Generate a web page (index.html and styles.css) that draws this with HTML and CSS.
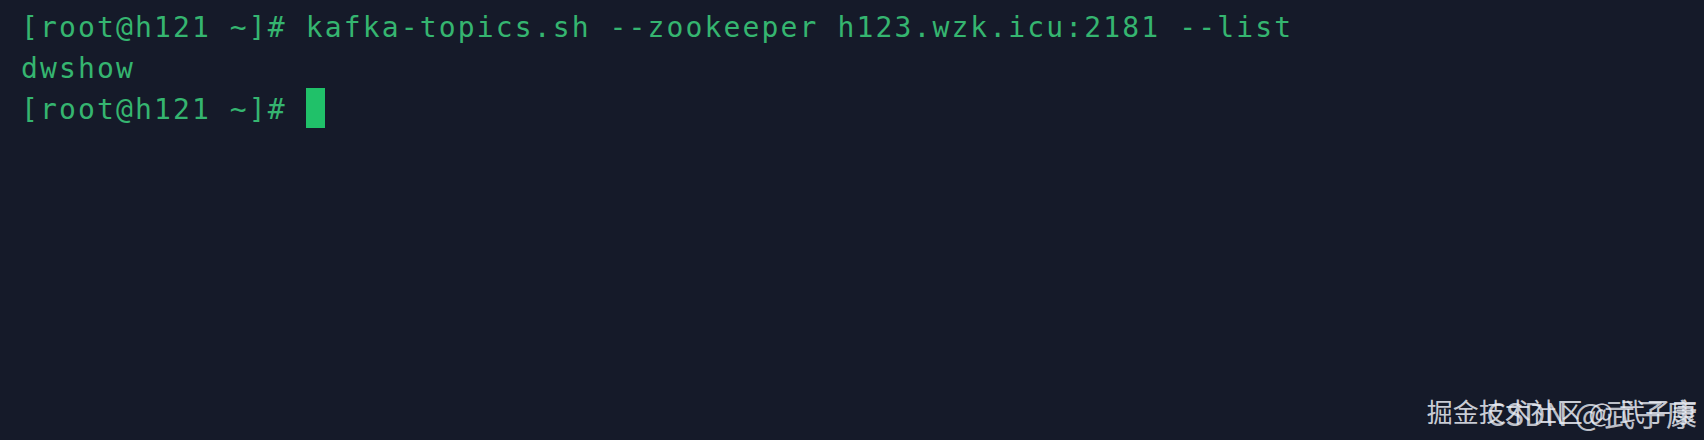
FILE: index.html
```html
<!DOCTYPE html>
<html lang="zh">
<head>
<meta charset="utf-8">
<title>terminal</title>
<link rel="stylesheet" href="styles.css">
</head>
<body>
<main class="terminal">
<div class="line">[root@h121 ~]# kafka-topics.sh --zookeeper h123.wzk.icu:2181 --list</div>
<div class="line">dwshow</div>
<div class="line">[root@h121 ~]# <span class="cursor"></span></div>
</main>
<div class="watermark wm-juejin">掘金技术社区 @ 武子康</div>
<div class="watermark wm-csdn">CSDN @武子康</div>
</body>
</html>
```

FILE: styles.css
```css
html, body {
  margin: 0;
  padding: 0;
}
body {
  width: 1704px;
  height: 440px;
  background: #151a29;
  position: relative;
  overflow: hidden;
}
.terminal {
  padding: 7px 0 0 21px;
  font-family: "DejaVu Sans Mono", "Liberation Mono", monospace;
  font-size: 28px;
  letter-spacing: 2.13px;
  line-height: 41px;
  color: #35b570;
}
.line {
  white-space: pre;
  height: 41px;
}
.cursor {
  display: inline-block;
  width: 19px;
  height: 40px;
  margin-top: -1px;
  background: #20c169;
  vertical-align: top;
}
.watermark {
  position: absolute;
  right: 7px;
  font-family: "Noto Sans CJK SC", "Noto Sans", sans-serif;
  color: rgba(235, 238, 245, 0.85);
  white-space: pre;
  line-height: 1;
}
.wm-juejin {
  font-size: 26px;
  bottom: 16px;
}
.wm-csdn {
  font-size: 31px;
  bottom: 12px;
  color: rgba(235, 238, 245, 0.8);
}
```
